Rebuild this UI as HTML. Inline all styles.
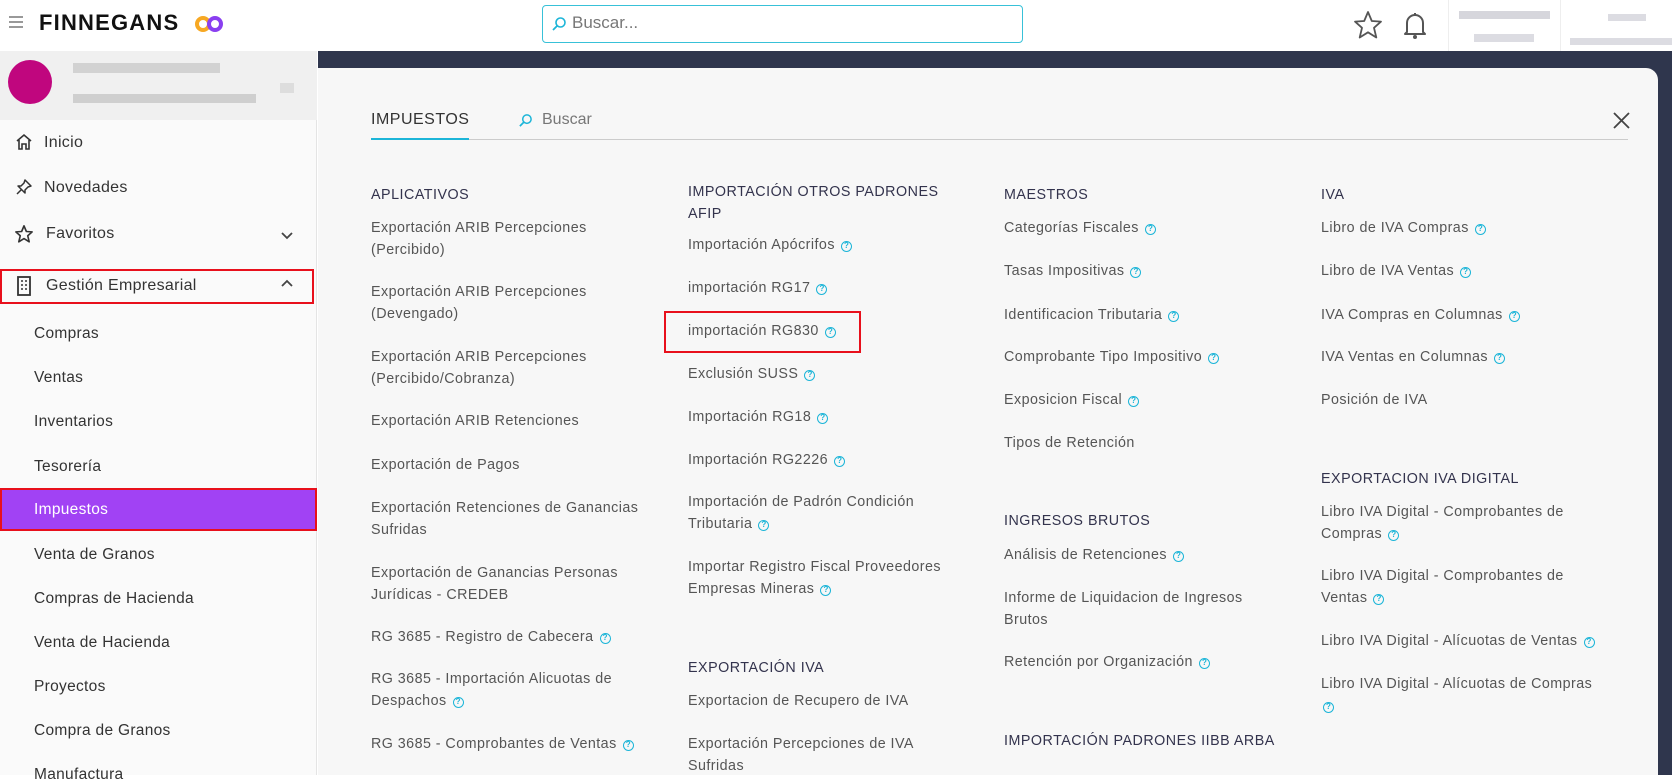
<!DOCTYPE html>
<html><head><meta charset="utf-8"><style>
*{margin:0;padding:0;box-sizing:border-box}
body{width:1672px;height:775px;overflow:hidden;background:#fff;font-family:"Liberation Sans",sans-serif;position:relative}
.a{position:absolute;white-space:nowrap}
.top{position:absolute;left:0;top:0;width:1672px;height:51px;background:#fff}
.side{position:absolute;left:0;top:51px;width:317px;height:724px;background:#fafafa;border-right:1px solid #e4e4e4}
.si{position:absolute;left:44px;font-size:16px;color:#333;letter-spacing:.3px}
.sub{position:absolute;left:34px;font-size:15.5px;color:#333;letter-spacing:.3px}
.dark{position:absolute;left:318px;top:51px;width:1354px;height:724px;background:#2f364d}
.panel{position:absolute;left:318px;top:68px;width:1340px;height:707px;background:#f7f7f7;border-top-right-radius:12px}
.it{position:absolute;font-size:14.3px;color:#555;line-height:21.5px;letter-spacing:.45px;white-space:nowrap}
.h{position:absolute;font-size:14.3px;color:#33334d;line-height:21.5px;letter-spacing:.5px;white-space:nowrap}
.q{display:inline-block;width:11px;height:11px;border:1.3px solid #1cb5d8;border-radius:50%;color:#1cb5d8;font-size:8px;line-height:8.5px;text-align:center;font-weight:bold;vertical-align:1px;margin-left:6px;letter-spacing:0}
</style></head><body>
<div class="top">
  <div class="a" style="left:9px;top:16px;width:14px;height:2px;background:#999;box-shadow:0 5px 0 #999,0 10px 0 #999"></div>
  <div class="a" style="left:39px;top:10px;font-size:22px;font-weight:bold;color:#111;letter-spacing:1.2px">FINNEGANS</div>
  <svg class="a" style="left:194px;top:14px" width="30" height="20" viewBox="0 0 30 20"><circle cx="9" cy="10" r="6" fill="none" stroke="#f7a823" stroke-width="4"/><circle cx="21" cy="10" r="6" fill="none" stroke="#8a3ff0" stroke-width="4"/></svg>
  <div class="a" style="left:542px;top:5px;width:481px;height:38px;border:1px solid #38c1d8;border-radius:4px"></div>
  <svg class="a" style="left:551px;top:16px" width="16" height="16" viewBox="0 0 16 16"><circle cx="9.5" cy="6.5" r="4.5" fill="none" stroke="#1cb5d8" stroke-width="1.6"/><line x1="6" y1="10" x2="2" y2="14" stroke="#1cb5d8" stroke-width="1.8"/></svg>
  <div class="a" style="left:572px;top:13px;font-size:17px;color:#777">Buscar...</div>
  <svg class="a" style="left:1352px;top:10px" width="32" height="30" viewBox="0 0 32 30"><path d="M16 2 L19.8 11 L29 11.6 L22 17.8 L24.3 27.5 L16 22.3 L7.7 27.5 L10 17.8 L3 11.6 L12.2 11 Z" fill="none" stroke="#555" stroke-width="1.8" stroke-linejoin="round"/></svg>
  <svg class="a" style="left:1402px;top:10px" width="26" height="30" viewBox="0 0 26 30"><path d="M13 3 V5 M5 22 V13 a8 8 0 0 1 16 0 V22 L23 24 H3 Z" fill="none" stroke="#555" stroke-width="2" stroke-linejoin="round"/><circle cx="13" cy="27" r="2" fill="#555"/></svg>
  <div class="a" style="left:1448px;top:0;width:1px;height:51px;background:#eee"></div>
  <div class="a" style="left:1459px;top:11px;width:91px;height:8px;background:#d6d6dc"></div>
  <div class="a" style="left:1474px;top:34px;width:60px;height:8px;background:#dcdce2"></div>
  <div class="a" style="left:1560px;top:0;width:1px;height:51px;background:#eee"></div>
  <div class="a" style="left:1608px;top:14px;width:38px;height:7px;background:#dcdce2"></div>
  <div class="a" style="left:1570px;top:38px;width:102px;height:7px;background:#dcdce2"></div>
</div>
<div class="side">
  <div class="a" style="left:0;top:0;width:317px;height:69px;background:#f0f0f0"></div>
  <div class="a" style="left:8px;top:9px;width:44px;height:44px;border-radius:50%;background:#c0067e"></div>
  <div class="a" style="left:73px;top:12px;width:147px;height:10px;background:#d2d2d2"></div>
  <div class="a" style="left:73px;top:43px;width:183px;height:9px;background:#cfcfcf"></div>
  <div class="a" style="left:280px;top:32px;width:14px;height:10px;background:#ddd"></div>
</div>
<svg class="a" style="left:15px;top:133px" width="18" height="18" viewBox="0 0 18 18"><path d="M2 8 L9 2 L16 8 M4 7 V16 H7 V11 H11 V16 H14 V7" fill="none" stroke="#333" stroke-width="1.6"/></svg>
<div class="si" style="top:134px">Inicio</div>
<svg class="a" style="left:15px;top:178px" width="18" height="18" viewBox="0 0 18 18"><path d="M10 2 L16 8 L13 9 L10 12 L10 15 L3 8 L6 8 L9 5 Z M6 12 L2 16" fill="none" stroke="#333" stroke-width="1.5" stroke-linejoin="round"/></svg>
<div class="si" style="top:179px">Novedades</div>
<svg class="a" style="left:14px;top:224px" width="20" height="20" viewBox="0 0 32 30"><path d="M16 2 L19.8 11 L29 11.6 L22 17.8 L24.3 27.5 L16 22.3 L7.7 27.5 L10 17.8 L3 11.6 L12.2 11 Z" fill="none" stroke="#333" stroke-width="2.6" stroke-linejoin="round"/></svg>
<div class="si" style="top:225px;left:46px">Favoritos</div>
<svg class="a" style="left:280px;top:231px" width="14" height="10" viewBox="0 0 14 10"><path d="M2 2 L7 7 L12 2" fill="none" stroke="#444" stroke-width="1.8"/></svg>
<div class="a" style="left:0;top:269px;width:314px;height:35px;border:2.5px solid #e8101c"></div>
<svg class="a" style="left:16px;top:276px" width="16" height="20" viewBox="0 0 16 20"><rect x="2" y="1" width="12" height="18" fill="none" stroke="#333" stroke-width="1.8"/><path d="M5 5h2M9 5h2M5 9h2M9 9h2M5 13h2M9 13h2" stroke="#333" stroke-width="1.6"/></svg>
<div class="si" style="top:277px;left:46px">Gestión Empresarial</div>
<svg class="a" style="left:280px;top:278px" width="14" height="10" viewBox="0 0 14 10"><path d="M2 8 L7 3 L12 8" fill="none" stroke="#444" stroke-width="1.8"/></svg>
<div class="sub" style="top:325px">Compras</div>
<div class="sub" style="top:369px">Ventas</div>
<div class="sub" style="top:413px">Inventarios</div>
<div class="sub" style="top:458px">Tesorería</div>
<div class="a" style="left:0;top:488px;width:317px;height:43px;background:#a142f4;border:2.5px solid #e8101c"></div>
<div class="sub" style="top:501px;color:#fff">Impuestos</div>
<div class="sub" style="top:546px">Venta de Granos</div>
<div class="sub" style="top:590px">Compras de Hacienda</div>
<div class="sub" style="top:634px">Venta de Hacienda</div>
<div class="sub" style="top:678px">Proyectos</div>
<div class="sub" style="top:722px">Compra de Granos</div>
<div class="sub" style="top:766px">Manufactura</div>
<div class="dark"></div>
<div class="panel"></div>
<div class="a" style="left:371px;top:111px;font-size:16px;color:#333;letter-spacing:.5px">IMPUESTOS</div>
<svg class="a" style="left:518px;top:113px" width="15" height="15" viewBox="0 0 16 16"><circle cx="9.5" cy="6.5" r="4.5" fill="none" stroke="#1cb5d8" stroke-width="1.6"/><line x1="6" y1="10" x2="2" y2="14" stroke="#1cb5d8" stroke-width="1.8"/></svg>
<div class="a" style="left:542px;top:111px;font-size:16px;color:#777">Buscar</div>
<div class="a" style="left:371px;top:139px;width:1257px;height:1px;background:#ccc"></div>
<div class="a" style="left:371px;top:138px;width:98px;height:2px;background:#1cb5d8"></div>
<svg class="a" style="left:1612px;top:111px" width="19" height="19" viewBox="0 0 19 19"><path d="M2 2 L17 17 M17 2 L2 17" stroke="#444" stroke-width="1.8"/></svg>

<div class="h" style="left:371px;top:185px">APLICATIVOS</div>
<div class="it" style="left:371px;top:218px">Exportación ARIB Percepciones<br>(Percibido)</div>
<div class="it" style="left:371px;top:282px">Exportación ARIB Percepciones<br>(Devengado)</div>
<div class="it" style="left:371px;top:347px">Exportación ARIB Percepciones<br>(Percibido/Cobranza)</div>
<div class="it" style="left:371px;top:411px">Exportación ARIB Retenciones</div>
<div class="it" style="left:371px;top:455px">Exportación de Pagos</div>
<div class="it" style="left:371px;top:498px">Exportación Retenciones de Ganancias<br>Sufridas</div>
<div class="it" style="left:371px;top:563px">Exportación de Ganancias Personas<br>Jurídicas - CREDEB</div>
<div class="it" style="left:371px;top:627px">RG 3685 - Registro de Cabecera<span class="q">?</span></div>
<div class="it" style="left:371px;top:669px">RG 3685 - Importación Alicuotas de<br>Despachos<span class="q">?</span></div>
<div class="it" style="left:371px;top:734px">RG 3685 - Comprobantes de Ventas<span class="q">?</span></div>

<div class="h" style="left:688px;top:182px">IMPORTACIÓN OTROS PADRONES<br>AFIP</div>
<div class="it" style="left:688px;top:235px">Importación Apócrifos<span class="q">?</span></div>
<div class="it" style="left:688px;top:278px">importación RG17<span class="q">?</span></div>
<div class="a" style="left:664px;top:311px;width:197px;height:42px;border:2.5px solid #e8101c"></div>
<div class="it" style="left:688px;top:321px">importación RG830<span class="q">?</span></div>
<div class="it" style="left:688px;top:364px">Exclusión SUSS<span class="q">?</span></div>
<div class="it" style="left:688px;top:407px">Importación RG18<span class="q">?</span></div>
<div class="it" style="left:688px;top:450px">Importación RG2226<span class="q">?</span></div>
<div class="it" style="left:688px;top:492px">Importación de Padrón Condición<br>Tributaria<span class="q">?</span></div>
<div class="it" style="left:688px;top:557px">Importar Registro Fiscal Proveedores<br>Empresas Mineras<span class="q">?</span></div>
<div class="h" style="left:688px;top:658px">EXPORTACIÓN IVA</div>
<div class="it" style="left:688px;top:691px">Exportacion de Recupero de IVA</div>
<div class="it" style="left:688px;top:734px">Exportación Percepciones de IVA<br>Sufridas</div>

<div class="h" style="left:1004px;top:185px">MAESTROS</div>
<div class="it" style="left:1004px;top:218px">Categorías Fiscales<span class="q">?</span></div>
<div class="it" style="left:1004px;top:261px">Tasas Impositivas<span class="q">?</span></div>
<div class="it" style="left:1004px;top:305px">Identificacion Tributaria<span class="q">?</span></div>
<div class="it" style="left:1004px;top:347px">Comprobante Tipo Impositivo<span class="q">?</span></div>
<div class="it" style="left:1004px;top:390px">Exposicion Fiscal<span class="q">?</span></div>
<div class="it" style="left:1004px;top:433px">Tipos de Retención</div>
<div class="h" style="left:1004px;top:511px">INGRESOS BRUTOS</div>
<div class="it" style="left:1004px;top:545px">Análisis de Retenciones<span class="q">?</span></div>
<div class="it" style="left:1004px;top:588px">Informe de Liquidacion de Ingresos<br>Brutos</div>
<div class="it" style="left:1004px;top:652px">Retención por Organización<span class="q">?</span></div>
<div class="h" style="left:1004px;top:731px">IMPORTACIÓN PADRONES IIBB ARBA</div>

<div class="h" style="left:1321px;top:185px">IVA</div>
<div class="it" style="left:1321px;top:218px">Libro de IVA Compras<span class="q">?</span></div>
<div class="it" style="left:1321px;top:261px">Libro de IVA Ventas<span class="q">?</span></div>
<div class="it" style="left:1321px;top:305px">IVA Compras en Columnas<span class="q">?</span></div>
<div class="it" style="left:1321px;top:347px">IVA Ventas en Columnas<span class="q">?</span></div>
<div class="it" style="left:1321px;top:390px">Posición de IVA</div>
<div class="h" style="left:1321px;top:469px">EXPORTACION IVA DIGITAL</div>
<div class="it" style="left:1321px;top:502px">Libro IVA Digital - Comprobantes de<br>Compras<span class="q">?</span></div>
<div class="it" style="left:1321px;top:566px">Libro IVA Digital - Comprobantes de<br>Ventas<span class="q">?</span></div>
<div class="it" style="left:1321px;top:631px">Libro IVA Digital - Alícuotas de Ventas<span class="q">?</span></div>
<div class="it" style="left:1321px;top:674px">Libro IVA Digital - Alícuotas de Compras<br><span class="q" style="margin-left:2px">?</span></div>
</body></html>
